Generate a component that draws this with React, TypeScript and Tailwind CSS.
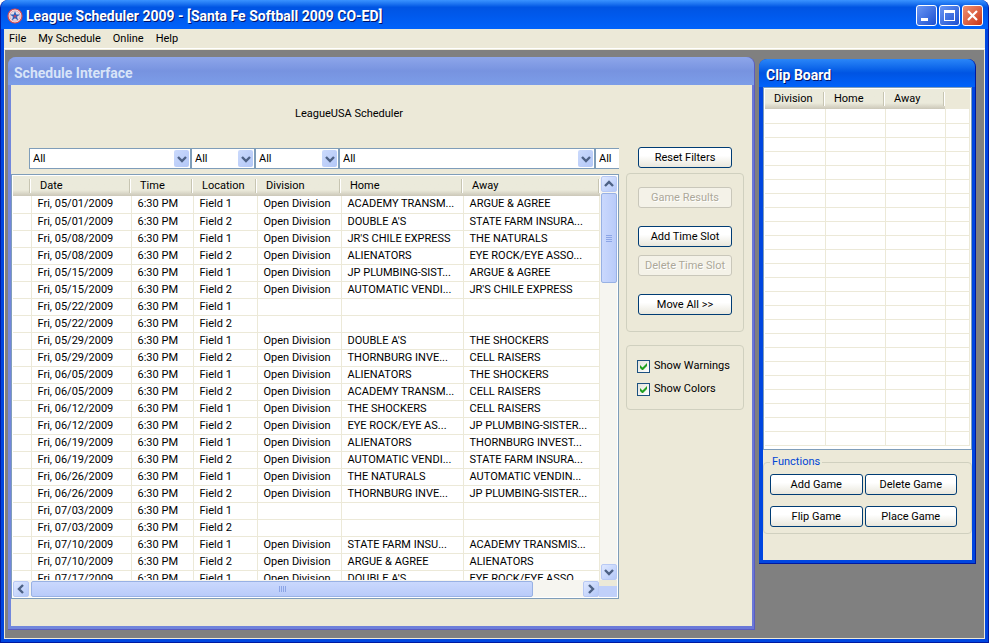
import { ReactNode } from "react";
import { clsx } from "clsx";

const filters = [
  { label: "Date", width: "w-[162px]" },
  { label: "Location", width: "w-16" },
  { label: "Division", width: "w-[84px]" },
  { label: "Home", width: "flex-1" },
];

const columns = [
  { title: "", width: "w-[18px]" },
  { title: "Date", width: "w-[100px]" },
  { title: "Time", width: "w-[62px]" },
  { title: "Location", width: "w-16" },
  { title: "Division", width: "w-[84px]" },
  { title: "Home", width: "w-[122px]" },
  { title: "Away", width: "" },
];

const OPEN = "Open Division";

const games = [
  ["05/01", "1", OPEN, "ACADEMY TRANSM...", "ARGUE & AGREE"],
  ["05/01", "2", OPEN, "DOUBLE A'S", "STATE FARM INSURA..."],
  ["05/08", "1", OPEN, "JR'S CHILE EXPRESS", "THE NATURALS"],
  ["05/08", "2", OPEN, "ALIENATORS", "EYE ROCK/EYE ASSO..."],
  ["05/15", "1", OPEN, "JP PLUMBING-SIST...", "ARGUE & AGREE"],
  ["05/15", "2", OPEN, "AUTOMATIC VENDI...", "JR'S CHILE EXPRESS"],
  ["05/22", "1", "", "", ""],
  ["05/22", "2", "", "", ""],
  ["05/29", "1", OPEN, "DOUBLE A'S", "THE SHOCKERS"],
  ["05/29", "2", OPEN, "THORNBURG INVE...", "CELL RAISERS"],
  ["06/05", "1", OPEN, "ALIENATORS", "THE SHOCKERS"],
  ["06/05", "2", OPEN, "ACADEMY TRANSM...", "CELL RAISERS"],
  ["06/12", "1", OPEN, "THE SHOCKERS", "CELL RAISERS"],
  ["06/12", "2", OPEN, "EYE ROCK/EYE AS...", "JP PLUMBING-SISTER..."],
  ["06/19", "1", OPEN, "ALIENATORS", "THORNBURG INVEST..."],
  ["06/19", "2", OPEN, "AUTOMATIC VENDI...", "STATE FARM INSURA..."],
  ["06/26", "1", OPEN, "THE NATURALS", "AUTOMATIC VENDIN..."],
  ["06/26", "2", OPEN, "THORNBURG INVE...", "JP PLUMBING-SISTER..."],
  ["07/03", "1", "", "", ""],
  ["07/03", "2", "", "", ""],
  ["07/10", "1", OPEN, "STATE FARM INSU...", "ACADEMY TRANSMIS..."],
  ["07/10", "2", OPEN, "ARGUE & AGREE", "ALIENATORS"],
  ["07/17", "1", OPEN, "DOUBLE A'S", "EYE ROCK/EYE ASSO..."],
];

const arrowPaths = {
  up: "M1 7l4-4 4 4",
  down: "M1 3l4 4 4-4",
  left: "M7 1L3 5l4 4",
  right: "M3 1l4 4-4 4",
};

function Arrow({ dir }: { dir: keyof typeof arrowPaths }) {
  return (
    <svg viewBox="0 0 10 10" className="size-2.5" fill="none" stroke="#4d6185" strokeWidth="2.4">
      <path d={arrowPaths[dir]} />
    </svg>
  );
}

function ScrollButton({ dir }: { dir: keyof typeof arrowPaths }) {
  return (
    <button
      aria-label={`Scroll ${dir}`}
      className="size-4 shrink-0 flex items-center justify-center rounded-xs border border-[#b8c9f4] bg-linear-to-br from-[#dfe8ff] to-[#b4c8f8]"
    >
      <Arrow dir={dir} />
    </button>
  );
}

function Combo({ label, width }: { label: string; width: string }) {
  return (
    <div className={clsx("relative", width)}>
      <select
        aria-label={`Filter by ${label}`}
        className="appearance-none w-full h-[21px] pl-[3px] bg-white border border-[#7f9db9]"
      >
        <option>All</option>
      </select>
      <span className="absolute right-0.5 inset-y-0.5 w-[15px] flex items-center justify-center rounded-xs bg-linear-to-br from-[#cbdafc] to-[#b3c7f7] pointer-events-none">
        <Arrow dir="down" />
      </span>
    </div>
  );
}

function Button({ children, disabled }: { children: ReactNode; disabled?: boolean }) {
  return (
    <button
      disabled={disabled}
      className={clsx(
        "w-full h-[21px] flex items-center justify-center rounded-[3px] border whitespace-nowrap",
        disabled
          ? "border-[#c9c7ba] bg-[#f4f2e8] text-[#aca899] text-shadow-[1px_1px_0_#fff]"
          : "border-[#003c74] bg-linear-to-b from-white from-40% to-[#e9e7dc]",
      )}
    >
      {children}
    </button>
  );
}

function CheckBox({ label }: { label: string }) {
  return (
    <label className="flex items-center gap-1">
      <span className="relative size-[13px] shrink-0">
        <input
          type="checkbox"
          defaultChecked
          className="peer block appearance-none size-[13px] border border-[#1c5180] bg-linear-to-br from-[#e3e3dc] to-white"
        />
        <svg viewBox="0 0 13 13" className="absolute inset-0 hidden peer-checked:block pointer-events-none" fill="#21a121">
          <path d="M3 5v3l2 2h1l4-4V3L5.500 7.500z" />
        </svg>
      </span>
      {label}
    </label>
  );
}

function HeaderCell({ title, width }: { title: string; width: string }) {
  return (
    <th className={clsx("p-0 font-normal text-left", width)}>
      <div className="h-5 flex items-center bg-linear-to-b from-[#ebeadb] from-70% to-[#cbc7b8]">
        <span className="flex-1 pl-[9px]">{title}</span>
        <span className="w-0.5 h-3.5 bg-[#c7c5b2] border-r border-white" />
      </div>
    </th>
  );
}

function ScheduleTable() {
  return (
    <table className="w-full table-fixed border-collapse">
      <thead>
        <tr>
          {columns.map((column) => (
            <HeaderCell key={column.title} {...column} />
          ))}
        </tr>
      </thead>
      <tbody>
        {games.map(([date, field, division, home, away]) => (
          <tr key={date + field}>
            {["", `Fri, ${date}/2009`, "6:30 PM", `Field ${field}`, division, home, away].map((text, i) => (
              <td
                key={i}
                className="h-[17px] p-0 pl-1.5 border-r border-b border-[#ece9d8] whitespace-nowrap overflow-hidden"
              >
                {text}
              </td>
            ))}
          </tr>
        ))}
      </tbody>
    </table>
  );
}

function ScheduleList() {
  return (
    <div className="flex-1 min-h-0 flex flex-col p-px border border-[#7f9db9] bg-white">
      <div className="flex-1 min-h-0 flex">
        <div className="flex-1 min-w-0 overflow-hidden">
          <ScheduleTable />
        </div>
        <div className="w-[17px] flex flex-col items-center bg-[#f6f5f0]">
          <ScrollButton dir="up" />
          <div className="w-4 h-[90px] mt-px flex flex-col items-center justify-center gap-px rounded-xs border border-[#98b1e4] bg-linear-to-r from-[#cad8fd] to-[#b9cbf9]">
            {[0, 1, 2, 3].map((i) => (
              <span key={i} className="w-1.5 h-px bg-[#8ca5e6]" />
            ))}
          </div>
          <div className="flex-1" />
          <ScrollButton dir="down" />
        </div>
      </div>
      <div className="h-[17px] flex items-center bg-[#f6f5f0]">
        <ScrollButton dir="left" />
        <div className="w-[502px] h-4 ml-0.5 flex items-center justify-center gap-px rounded-xs border border-[#98b1e4] bg-linear-to-b from-[#cad8fd] to-[#b9cbf9]">
          {[0, 1, 2, 3].map((i) => (
            <span key={i} className="w-px h-1.5 bg-[#8ca5e6]" />
          ))}
        </div>
        <div className="flex-1" />
        <ScrollButton dir="right" />
        <div className="w-[18px] h-full flex flex-col">
          <div className="h-1.5 bg-[#ece9d8]" />
          <div className="flex-1 bg-[#c0d0fa]" />
        </div>
      </div>
    </div>
  );
}

function ScheduleWindow() {
  return (
    <section className="flex-1 min-w-0 flex flex-col rounded-t-lg bg-linear-to-r from-[#7287dc] to-[#6a78d8] pl-[3px] pr-0.5 pb-[3px] border-r border-b border-[#5a5cc0]">
      <h2 className="h-7 -ml-[3px] -mr-0.5 pl-1.5 pt-1 flex items-center rounded-t-lg bg-linear-to-b from-[#8ea6ea] via-[#7793e0] to-[#7c9de8] text-[14px] font-bold text-[#d8e4f8]">
        Schedule Interface
      </h2>
      <div className="flex-1 min-h-0 flex bg-[#ece9d8]">
        <div className="flex-1 min-w-0 flex flex-col pb-[27px]">
          <p className="mt-[21px] ml-[284px] leading-4">LeagueUSA Scheduler</p>
          <div className="mt-[26px] mb-[5px] ml-[18px] flex">
            {filters.map((filter) => (
              <Combo key={filter.label} {...filter} />
            ))}
            <div className="w-6 overflow-hidden">
              <select aria-label="Filter by Away" className="appearance-none w-30 h-[21px] pl-[3px] bg-white border border-[#7f9db9]">
                <option>All</option>
              </select>
            </div>
          </div>
          <ScheduleList />
        </div>
        <aside className="w-[133px] pt-[62px] pl-[7px] pr-2">
          <div className="px-3">
            <Button>Reset Filters</Button>
          </div>
          <div className="h-[159px] mt-[5px] px-[11px] pt-[13px] rounded-[4px] border border-[#d0d0bf]">
            <Button disabled>Game Results</Button>
            <div className="mt-[18px] mb-2">
              <Button>Add Time Slot</Button>
            </div>
            <Button disabled>Delete Time Slot</Button>
            <div className="mt-[18px]">
              <Button>Move All &gt;&gt;</Button>
            </div>
          </div>
          <div className="mt-[13px] pl-2.5 py-3 flex flex-col gap-[7px] leading-4 rounded-[4px] border border-[#d0d0bf]">
            <CheckBox label="Show Warnings" />
            <CheckBox label="Show Colors" />
          </div>
        </aside>
      </div>
    </section>
  );
}

const clipColumns = [
  { title: "Division", width: "w-[60px]" },
  { title: "Home", width: "w-[60px]" },
  { title: "Away", width: "w-[60px]" },
];

function ClipBoard() {
  return (
    <section className="w-[217px] mt-0.5 flex flex-col rounded-t-lg border-r border-b border-[#0019a0] bg-[#0046e0] pl-1 pr-[3px] pb-[3px]">
      <h2 className="h-7 -ml-1 -mr-[3px] pl-[7px] pt-1 flex items-center rounded-t-lg bg-linear-to-b from-[#2a86f8] via-[#0054e3] to-[#0062fb] text-[14px] font-bold text-white text-shadow-[1px_1px_0_#00136b]">
        Clip Board
      </h2>
      <div className="bg-[#ece9d8] pb-[26px]">
        <div className="h-[363px] p-px border border-[#7f9db9] bg-white overflow-hidden">
          <table className="w-full table-fixed border-collapse">
            <thead>
              <tr>
                {clipColumns.map((column) => (
                  <HeaderCell key={column.title} {...column} />
                ))}
                <td className="bg-[#ece9d8]" />
              </tr>
            </thead>
            <tbody>
              {Array.from({ length: 24 }, (_, row) => (
                <tr key={row}>
                  {[0, 1, 2, 3].map((i) => (
                    <td key={i} className="h-3.5 p-0 border-r border-b border-[#ece9d8]" />
                  ))}
                </tr>
              ))}
            </tbody>
          </table>
        </div>
        <fieldset className="mt-1 px-1.5 pb-1.5 rounded-[4px] border border-[#d0d0bf]">
          <legend className="px-0.5 leading-4 text-[#0046d5]">Functions</legend>
          <div className="pt-1 pr-2 grid grid-cols-2 gap-x-0.5 gap-y-[11px]">
            <Button>Add Game</Button>
            <Button>Delete Game</Button>
            <Button>Flip Game</Button>
            <Button>Place Game</Button>
          </div>
        </fieldset>
      </div>
    </section>
  );
}

function TitleBar() {
  const control = "size-[21px] rounded-[3px] border border-white flex items-center justify-center";
  return (
    <header className="h-[29px] pl-1.5 pr-[5px] pt-0.5 flex items-center bg-linear-to-b from-[#3a93ff] via-[#0054e3] via-25% to-[#0062fb]">
      <svg viewBox="0 0 16 16" className="size-4">
        <circle cx="8" cy="8" r="7" fill="#f4e8ec" stroke="#d8484c" strokeWidth="1.200" />
        <circle cx="8" cy="8" r="5.200" fill="#dcdcec" stroke="#e8a0a0" strokeWidth="0.800" />
        <path d="M8 3l1.300 3.500H13l-3 2.300 1.200 3.700L8 10.300l-3.200 2.200L6 8.800 3 6.500h3.700z" fill="#3060b8" />
        <circle cx="8" cy="8.300" r="1.200" fill="#c04060" />
      </svg>
      <h1 className="flex-1 pl-[3px] text-[14px] font-bold text-white text-shadow-[1px_1px_0_#00136b]">
        League Scheduler 2009 - [Santa Fe Softball 2009 CO-ED]
      </h1>
      <div className="flex gap-0.5">
        <button aria-label="Minimize" className={clsx(control, "bg-linear-to-br from-[#6a96f4] to-[#1c4ed0]")}>
          <svg viewBox="0 0 19 19" className="size-[19px]">
            <path d="M4 12h7v3H4z" fill="#fff" />
          </svg>
        </button>
        <button aria-label="Maximize" className={clsx(control, "bg-linear-to-br from-[#6a96f4] to-[#1c4ed0]")}>
          <svg viewBox="0 0 19 19" className="size-[19px]">
            <path d="M4 4h11v11H4zM5 7v7h9V7z" fill="#fff" fillRule="evenodd" />
          </svg>
        </button>
        <button aria-label="Close" className={clsx(control, "bg-linear-to-br from-[#f09070] to-[#c83010]")}>
          <svg viewBox="0 0 19 19" className="size-[19px]">
            <path d="M5 5l9 9M14 5l-9 9" stroke="#fff" strokeWidth="2.200" />
          </svg>
        </button>
      </div>
    </header>
  );
}

export default function App() {
  return (
    <div className="h-screen flex flex-col bg-white font-[Roboto,sans-serif] text-[11px] leading-4 text-black">
      <div className="flex-1 min-h-0 flex flex-col rounded-t-lg overflow-hidden bg-[#0046e0] border-l border-r border-b border-[#0019a0]">
        <TitleBar />
        <div className="flex-1 min-h-0 mx-[3px] mb-[3px] flex flex-col">
          <nav className="h-5 px-[5px] flex items-center gap-3 bg-[#ece9d8] border-b border-white">
            {["File", "My Schedule", "Online", "Help"].map((item) => (
              <button key={item}>{item}</button>
            ))}
          </nav>
          <main className="flex-1 min-h-0 pt-[7px] pb-2 pl-[3px] pr-2 flex items-start gap-1 bg-[#808080] border border-[#ece9d8]">
            <div className="flex-1 min-w-0 self-stretch flex">
              <ScheduleWindow />
            </div>
            <ClipBoard />
          </main>
        </div>
      </div>
    </div>
  );
}
